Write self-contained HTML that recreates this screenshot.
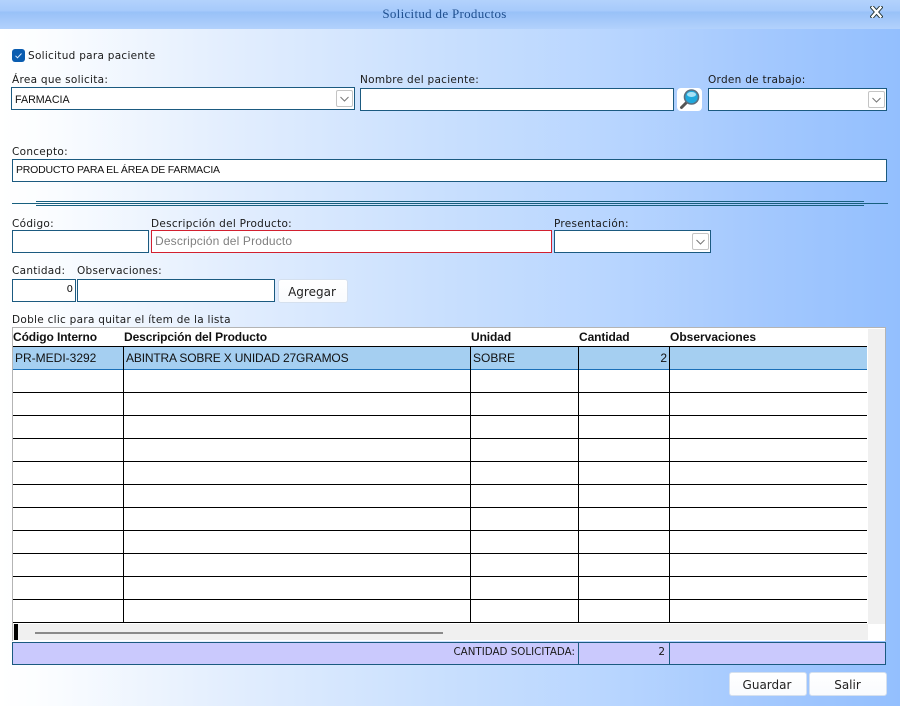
<!DOCTYPE html>
<html><head><meta charset="utf-8"><style>
html,body{margin:0;padding:0}
body{width:900px;height:706px;position:relative;overflow:hidden;background:linear-gradient(90deg,#fff 0,#fbfdff 5%,#e3eefe 25%,#c8dffe 50%,#b9d6ff 67%,#a3c8fe 85%,#93bffe 100%);font-family:"DejaVu Sans",sans-serif;font-size:10.5px;color:#111}
div,svg{position:absolute;box-sizing:border-box}
.t{white-space:nowrap;line-height:14px}
.l{font-family:"DejaVu Sans",sans-serif;font-size:10.5px;letter-spacing:.28px;color:#1a1a1a}
.i{background:#fff;border:1px solid #1b5a80;height:23px}
.a{font-family:"Liberation Sans",sans-serif;font-size:12px;color:#111}
.b{background:linear-gradient(#fff,#f9fbfe);border:1px solid #d5e0ee;border-radius:3px;text-align:center;font-size:12px;line-height:21px;color:#222}
.c{background:#fff;border:1px solid #c4c4c4;border-radius:2px;width:17px;height:17px}
.h{font-family:"Liberation Sans",sans-serif;font-weight:bold;font-size:12px;letter-spacing:-.1px;color:#111}
.hl{background:#000;height:1px;left:13px;width:854px}
.vl{background:#000;width:1px;top:347px;height:276px}
</style></head><body>
<div style="left:0;top:0;width:900px;height:29px;background:linear-gradient(#b3d2fc 0,#a6cafb 11px,#98c1f8 12px,#b2d1fc 29px)"></div>
<div class="t" style="left:0;width:889px;top:7px;text-align:center;font-family:'Liberation Serif',serif;font-size:13px;letter-spacing:.3px;color:#1f4f8f">Solicitud de Productos</div>
<svg style="left:870px;top:6px" width="13" height="12" viewBox="0 0 13 12"><path d="M2.500 1.500L10.500 10.500M10.500 1.500L2.500 10.500" stroke="#233" stroke-width="4.200" stroke-linecap="square"/><path d="M2.500 1.500L10.500 10.500M10.500 1.500L2.500 10.500" stroke="#fff" stroke-width="2.400" stroke-linecap="square"/></svg>

<div style="left:12px;top:49px;width:13px;height:13px;background:#0a5cb0;border-radius:3px"></div>
<svg style="left:12px;top:49px" width="13" height="13"><path d="M3.500 6.800L5.500 8.800L9.500 4.500" fill="none" stroke="#dcecff" stroke-width="1"/></svg>
<div class="t l" style="left:28px;top:49px">Solicitud para paciente</div>

<div class="t l" style="left:12px;top:73px">Área que solicita:</div>
<div class="i" style="left:11px;top:87px;width:344px"></div>
<div class="t a" style="left:15px;top:93px;font-size:10.700px">FARMACIA</div>
<div class="c" style="left:336px;top:90px"></div>
<svg style="left:336px;top:90px" width="17" height="17"><path d="M4.500 7L8.500 11L12.500 7" fill="none" stroke="#777"/></svg>

<div class="t l" style="left:360px;top:73px">Nombre del paciente:</div>
<div class="i" style="left:360px;top:88px;width:314px"></div>
<div style="left:677px;top:88px;width:25px;height:23px;background:#fff;border-radius:4px"></div>
<svg style="left:678px;top:88px" width="24" height="23" viewBox="0 0 24 23"><path d="M9 14L3.500 19.500" stroke="#555" stroke-width="3" stroke-linecap="round"/><circle cx="13.500" cy="9" r="7" fill="#20a8dc" stroke="#5b6f80" stroke-width="1.600"/><ellipse cx="13.500" cy="6.500" rx="4.500" ry="2.500" fill="#a8e2f6"/></svg>

<div class="t l" style="left:708px;top:73px">Orden de trabajo:</div>
<div class="i" style="left:708px;top:88px;width:179px"></div>
<div class="c" style="left:868px;top:91px"></div>
<svg style="left:868px;top:91px" width="17" height="17"><path d="M4.500 7L8.500 11L12.500 7" fill="none" stroke="#777"/></svg>

<div class="t l" style="left:12px;top:145px">Concepto:</div>
<div class="i" style="left:12px;top:159px;width:875px"></div>
<div class="t a" style="left:16px;top:163px;font-size:10.500px;letter-spacing:-.2px">PRODUCTO PARA EL ÁREA DE FARMACIA</div>

<div style="left:12px;top:203px;width:876px;height:1px;background:#17607f"></div>
<div style="left:36px;top:201px;width:828px;height:1px;background:#17607f"></div>
<div style="left:36px;top:205px;width:828px;height:1px;background:#17607f"></div>

<div class="t l" style="left:12px;top:217px">Código:</div>
<div class="i" style="left:12px;top:230px;width:137px"></div>
<div class="t l" style="left:151px;top:217px">Descripción del Producto:</div>
<div class="i" style="left:151px;top:230px;width:401px;border-color:#d2202f"></div>
<div class="t a" style="left:155px;top:234px;color:#808080;letter-spacing:.16px">Descripción del Producto</div>
<div class="t l" style="left:554px;top:217px">Presentación:</div>
<div class="i" style="left:554px;top:230px;width:157px"></div>
<div class="c" style="left:692px;top:233px"></div>
<svg style="left:692px;top:233px" width="17" height="17"><path d="M4.500 7L8.500 11L12.500 7" fill="none" stroke="#777"/></svg>

<div class="t l" style="left:12px;top:264px">Cantidad:</div>
<div class="t l" style="left:77px;top:264px">Observaciones:</div>
<div class="i" style="left:12px;top:279px;width:64px"></div>
<div class="t" style="left:12px;width:61px;top:283px;text-align:right;font-size:10px">0</div>
<div class="i" style="left:77px;top:279px;width:198px"></div>
<div class="b" style="left:278px;top:279px;width:70px;height:24px;line-height:24px;text-indent:-2px">Agregar</div>

<div class="t l" style="left:12px;top:313px">Doble clic para quitar el ítem de la lista</div>

<div style="left:12px;top:327px;width:874px;height:314px;background:#fff;border:1px solid #b4b4b4;border-bottom:none"></div>
<div style="left:868px;top:329px;width:17px;height:295px;background:#f0f0f0"></div>
<div style="left:13px;top:624px;width:855px;height:16px;background:#f0f0f0"></div>
<div style="left:14px;top:624px;width:4px;height:16px;background:#000"></div>
<div style="left:35px;top:632px;width:408px;height:2px;background:#8a8a8a"></div>

<div class="t h" style="left:13px;top:330px">Código Interno</div>
<div class="t h" style="left:124px;top:330px">Descripción del Producto</div>
<div class="t h" style="left:471px;top:330px">Unidad</div>
<div class="t h" style="left:579px;top:330px">Cantidad</div>
<div class="t h" style="left:670px;top:330px;letter-spacing:0">Observaciones</div>

<div style="left:13px;top:346px;width:854px;height:24px;background:#a5cff1;border-top:1px solid #000;border-bottom:1px solid #1b70b8"></div>
<div class="t a" style="left:15px;top:351px">PR-MEDI-3292</div>
<div class="t a" style="left:126px;top:351px;letter-spacing:-.16px">ABINTRA SOBRE X UNIDAD 27GRAMOS</div>
<div class="t a" style="left:473px;top:351px">SOBRE</div>
<div class="t a" style="left:579px;width:88px;top:351px;text-align:right">2</div>

<div class="hl" style="top:392px"></div>
<div class="hl" style="top:415px"></div>
<div class="hl" style="top:438px"></div>
<div class="hl" style="top:461px"></div>
<div class="hl" style="top:484px"></div>
<div class="hl" style="top:507px"></div>
<div class="hl" style="top:530px"></div>
<div class="hl" style="top:553px"></div>
<div class="hl" style="top:576px"></div>
<div class="hl" style="top:599px"></div>
<div class="hl" style="top:622px"></div>
<div class="vl" style="left:123px"></div>
<div class="vl" style="left:470px"></div>
<div class="vl" style="left:578px"></div>
<div class="vl" style="left:669px"></div>

<div style="left:12px;top:642px;width:874px;height:23px;background:#cac9fd;border:1px solid #1b5a80"></div>
<div style="left:578px;top:642px;width:1px;height:23px;background:#1b5a80"></div>
<div style="left:669px;top:642px;width:1px;height:23px;background:#1b5a80"></div>
<div class="t l" style="left:300px;width:275px;top:645px;text-align:right;font-size:10.300px;letter-spacing:0">CANTIDAD SOLICITADA:</div>
<div class="t l" style="left:579px;width:86px;top:645px;text-align:right;font-size:10.500px;letter-spacing:0">2</div>

<div class="b" style="left:729px;top:672px;width:78px;height:24px;line-height:24px;text-indent:-2px">Guardar</div>
<div class="b" style="left:809px;top:672px;width:78px;height:24px;line-height:24px;text-indent:-1px">Salir</div>
</body></html>
